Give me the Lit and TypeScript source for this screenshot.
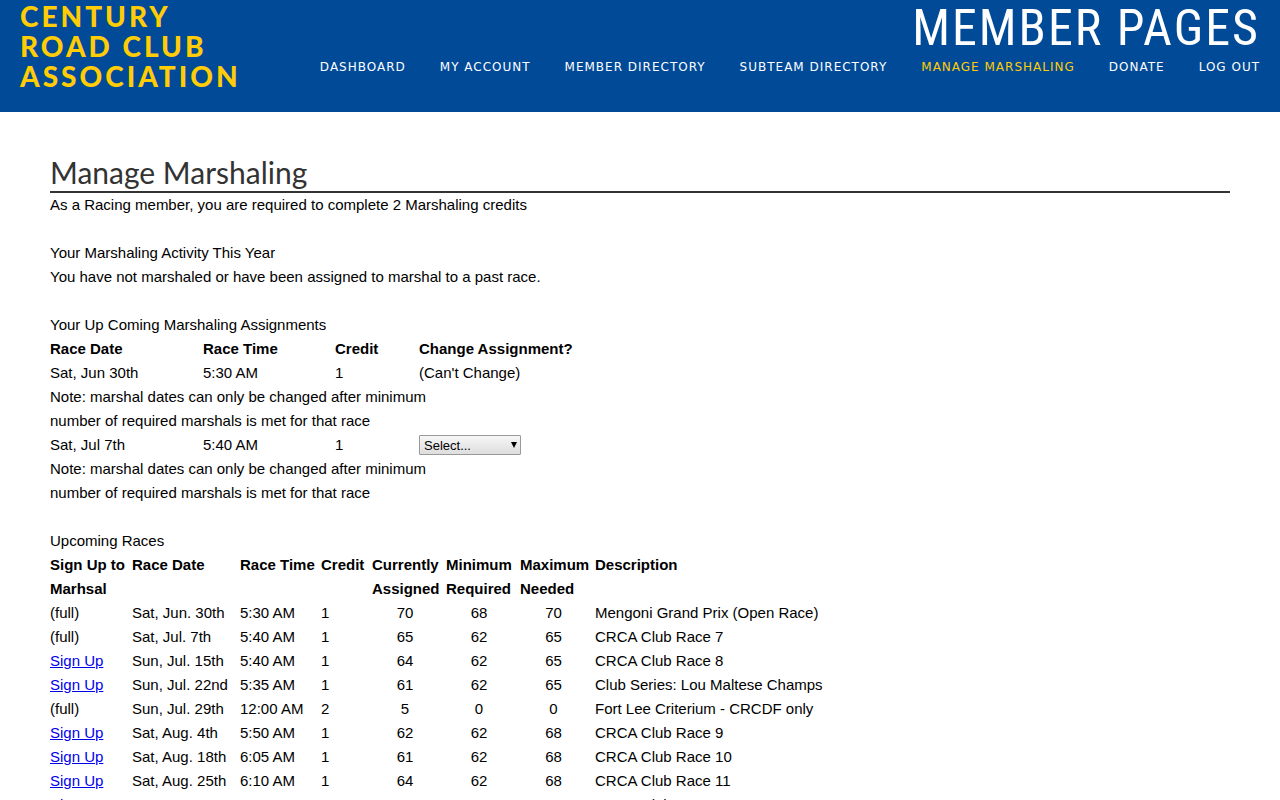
import { LitElement, html, css } from "lit";
import { customElement } from "lit/decorators.js";

interface Race {
  open: boolean;
  date: string;
  time: string;
  credit: number;
  assigned: number;
  min: number;
  max: number;
  description: string;
}

const NAV = [
  "Dashboard",
  "My Account",
  "Member Directory",
  "Subteam Directory",
  "Manage Marshaling",
  "Donate",
  "Log Out",
];

const race = (
  open: boolean, date: string, time: string, credit: number,
  assigned: number, min: number, max: number, description: string,
): Race => ({ open, date, time, credit, assigned, min, max, description });

const RACES: Race[] = [
  race(false, "Sat, Jun. 30th", "5:30 AM", 1, 70, 68, 70, "Mengoni Grand Prix (Open Race)"),
  race(false, "Sat, Jul. 7th", "5:40 AM", 1, 65, 62, 65, "CRCA Club Race 7"),
  race(true, "Sun, Jul. 15th", "5:40 AM", 1, 64, 62, 65, "CRCA Club Race 8"),
  race(true, "Sun, Jul. 22nd", "5:35 AM", 1, 61, 62, 65, "Club Series: Lou Maltese Champs"),
  race(false, "Sun, Jul. 29th", "12:00 AM", 2, 5, 0, 0, "Fort Lee Criterium - CRCDF only"),
  race(true, "Sat, Aug. 4th", "5:50 AM", 1, 62, 62, 68, "CRCA Club Race 9"),
  race(true, "Sat, Aug. 18th", "6:05 AM", 1, 61, 62, 68, "CRCA Club Race 10"),
  race(true, "Sat, Aug. 25th", "6:10 AM", 1, 64, 62, 68, "CRCA Club Race 11"),
  race(true, "Sat, Sep. 1st", "6:15 AM", 1, 64, 62, 68, "CRCA Club Race 12"),
];

@customElement("site-header")
class SiteHeader extends LitElement {
  static styles = css`
    :host {
      display: flex;
      justify-content: space-between;
      box-sizing: border-box;
      min-height: 112px;
      padding: 0 20px;
      background: #004a97;
    }
    .logo {
      margin-top: 1px;
      font: 900 28px/30px "Proxima Nova", Lato, sans-serif;
      letter-spacing: 3px;
      text-transform: uppercase;
      text-decoration: none;
      color: #ffcc05;
    }
    .logo span {
      display: block;
    }
    .side {
      display: flex;
      flex-direction: column;
      align-items: flex-end;
    }
    .title {
      font: 50px/56px "Roboto Condensed", "Arial Narrow", sans-serif;
      letter-spacing: 2px;
      text-transform: uppercase;
      color: #fff;
    }
    .nav {
      display: flex;
      gap: 34px;
      font: 12px/22px "DejaVu Sans", sans-serif;
      letter-spacing: 1px;
    }
    .link {
      color: #fff;
      text-decoration: none;
      text-transform: uppercase;
      white-space: nowrap;
    }
    .current {
      color: #ffcc05;
    }
  `;

  render() {
    return html`
      <a class="logo" href="#"><span>Century</span><span>Road Club</span><span>Association</span></a>
      <div class="side">
        <div class="title">Member Pages</div>
        <nav class="nav">
          ${NAV.map((n) => html`<a class="link ${n === "Manage Marshaling" ? "current" : ""}" href="#">${n}</a>`)}
        </nav>
      </div>
    `;
  }
}

@customElement("app-root")
class AppRoot extends LitElement {
  static styles = css`
    :host {
      display: block;
      background: #fff;
      color: #000;
      font: 15px/24px "Liberation Sans", Arial, sans-serif;
    }
    .content {
      padding: 42px 50px;
    }
    .heading {
      margin: 0;
      padding-bottom: 1px;
      border-bottom: 2px solid #333;
      font: 400 30px/36px "Proxima Nova", Lato, sans-serif;
      color: #333;
    }
    .block {
      margin: 0 0 24px;
    }
    .sub,
    .text {
      margin: 0;
      font-size: 15px;
      font-weight: 400;
    }
    .grid {
      width: 100%;
      table-layout: fixed;
      border-collapse: collapse;
    }
    .grid th,
    .grid td {
      padding: 0;
      text-align: left;
      vertical-align: top;
      white-space: nowrap;
    }
    .assignments .date {
      width: 153px;
    }
    .assignments .time {
      width: 132px;
    }
    .assignments .credit {
      width: 84px;
    }
    .races .signup {
      width: 82px;
    }
    .races .date {
      width: 108px;
    }
    .races .time {
      width: 81px;
    }
    .races .credit {
      width: 51px;
    }
    .races .amount {
      width: 74px;
    }
    .races .amount-wide {
      width: 75px;
    }
    .races .count {
      padding-right: 8px;
      text-align: center;
    }
    .link {
      color: #0000ee;
    }
    .picker {
      display: inline-grid;
      align-items: center;
      height: 24px;
      vertical-align: top;
    }
    .select,
    .arrow {
      grid-area: 1 / 1;
    }
    .select {
      appearance: none;
      box-sizing: border-box;
      width: 102px;
      height: 20px;
      margin: 0;
      padding: 1px 4px 0;
      border: 1px solid #999;
      border-radius: 1px;
      background: linear-gradient(#f6f6f6, #dedede);
      color: #000;
      font: 13px/16px "Liberation Sans", Arial, sans-serif;
    }
    .arrow {
      justify-self: end;
      width: 6px;
      height: 6px;
      margin-right: 4px;
      pointer-events: none;
    }
  `;

  private note() {
    return html`<tr>
      <td colspan="3">Note: marshal dates can only be changed after minimum<br />number of required marshals is met for that race</td>
      <td></td>
    </tr>`;
  }

  render() {
    return html`
      <site-header></site-header>
      <main class="content">
        <h1 class="heading">Manage Marshaling</h1>
        <p class="block">As a Racing member, you are required to complete 2 Marshaling credits</p>
        <section class="block">
          <h2 class="sub">Your Marshaling Activity This Year</h2>
          <p class="text">You have not marshaled or have been assigned to marshal to a past race.</p>
        </section>
        <section class="block">
          <h2 class="sub">Your Up Coming Marshaling Assignments</h2>
          <table class="grid assignments">
            <tr>
              <th class="date">Race Date</th>
              <th class="time">Race Time</th>
              <th class="credit">Credit</th>
              <th>Change Assignment?</th>
            </tr>
            <tr><td>Sat, Jun 30th</td><td>5:30 AM</td><td>1</td><td>(Can't Change)</td></tr>
            ${this.note()}
            <tr>
              <td>Sat, Jul 7th</td><td>5:40 AM</td><td>1</td>
              <td>
                <span class="picker">
                  <select class="select" aria-label="Change assignment"><option>Select...</option></select>
                  <svg class="arrow" viewBox="0 0 6 6" aria-hidden="true"><path d="M0 0h6L3 6z" /></svg>
                </span>
              </td>
            </tr>
            ${this.note()}
          </table>
        </section>
        <section class="block">
          <h2 class="sub">Upcoming Races</h2>
          <table class="grid races">
            <tr>
              <th class="signup">Sign Up to<br />Marhsal</th>
              <th class="date">Race Date</th>
              <th class="time">Race Time</th>
              <th class="credit">Credit</th>
              <th class="amount">Currently<br />Assigned</th>
              <th class="amount">Minimum<br />Required</th>
              <th class="amount-wide">Maximum<br />Needed</th>
              <th>Description</th>
            </tr>
            ${RACES.map(
              (r) => html`<tr>
                <td>${r.open ? html`<a class="link" href="#">Sign Up</a>` : "(full)"}</td>
                <td>${r.date}</td>
                <td>${r.time}</td>
                <td>${r.credit}</td>
                <td class="count">${r.assigned}</td>
                <td class="count">${r.min}</td>
                <td class="count">${r.max}</td>
                <td>${r.description}</td>
              </tr>`,
            )}
          </table>
        </section>
      </main>
    `;
  }
}
